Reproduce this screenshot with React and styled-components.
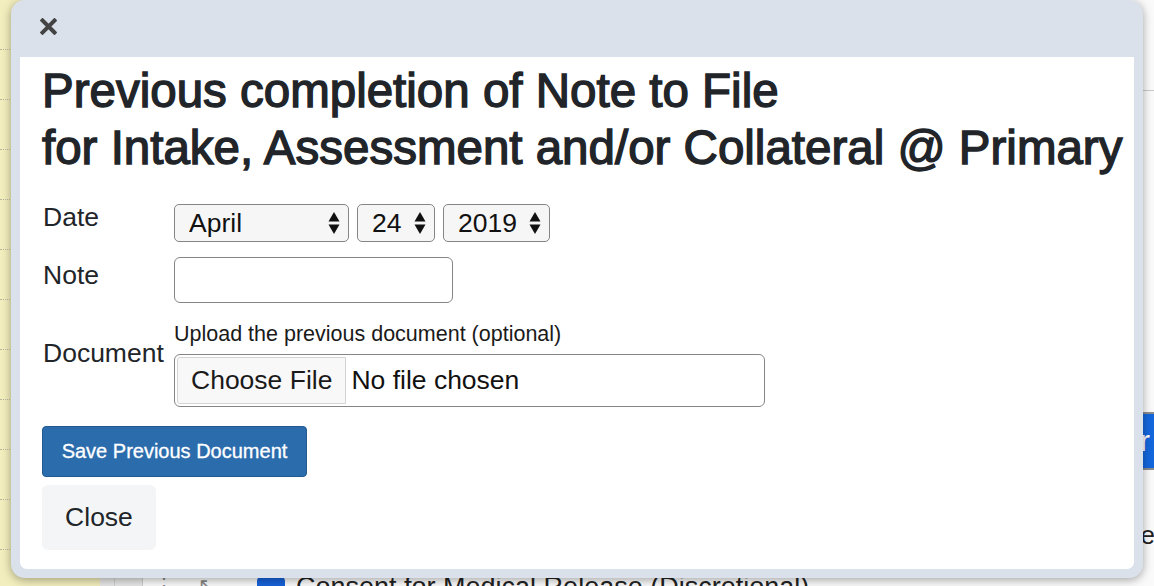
import styled, { createGlobalStyle } from 'styled-components'

const GlobalStyle = createGlobalStyle`
  * { box-sizing: border-box; }
  html, body {
    margin: 0;
    height: 100%;
    overflow: hidden;
    font-family: "Liberation Sans", Arial, sans-serif;
    color: #212529;
    background: #ffffff;
  }
`

const months = ['January', 'February', 'March', 'April', 'May', 'June', 'July', 'August', 'September', 'October', 'November', 'December']
const days = Array.from({ length: 31 }, (_, i) => i + 1)
const years = [2017, 2018, 2019, 2020, 2021]

function UpDown() {
  return (
    <svg width='12' height='24' viewBox='0 0 12 24'>
      <path d='M6 1 L11.5 10.5 H0.5 Z' fill='#111' />
      <path d='M6 23 L11.5 13.5 H0.5 Z' fill='#111' />
    </svg>
  )
}

function DateSelect({ width, value, options }) {
  return (
    <SelectWrap $width={width}>
      <Select defaultValue={value}>
        {options.map(o => <option key={o} value={o}>{o}</option>)}
      </Select>
      <Arrow><UpDown /></Arrow>
    </SelectWrap>
  )
}

function App() {
  return (
    <>
      <GlobalStyle />
      <Page>
        <Sidebar>
          {Array.from({ length: 12 }, (_, i) => <SideRow key={i} />)}
        </Sidebar>
        <Main>
          <TopBar />
          <Section />
          <ActionRow>
            <BlueButton>Order</BlueButton>
          </ActionRow>
          <PreviewRow>Review</PreviewRow>
          <ChecklistRow>
            <Cell $width={15} />
            <Cell $width={28} />
            <Handle>⋮</Handle>
            <Handle>↖</Handle>
            <CheckBox />
            <CheckText>Consent for Medical Release (Discretional)</CheckText>
          </ChecklistRow>
        </Main>
      </Page>

      <Modal>
        <ModalHeader>
          <CloseX aria-label='close'>
            <svg width='17' height='17' viewBox='0 0 17 17'>
              <path d='M2.5 2.5 L14.5 14.5 M14.5 2.5 L2.5 14.5' stroke='#444' strokeWidth='4' strokeLinecap='square' />
            </svg>
          </CloseX>
        </ModalHeader>
        <ModalBody>
          <Title>
            Previous completion of Note to File
            <br />
            for Intake, Assessment and/or Collateral @ Primary
          </Title>
          <Form>
            <Row>
              <Label>Date</Label>
              <Fields>
                <DateSelect width={175} value='April' options={months} />
                <DateSelect width={78} value={24} options={days} />
                <DateSelect width={107} value={2019} options={years} />
              </Fields>
            </Row>
            <Row $gap={15}>
              <Label $offset={5}>Note</Label>
              <TextInput type='text' />
            </Row>
            <Row $gap={18}>
              <Label $offset={19}>Document</Label>
              <Stack>
                <Caption>Upload the previous document (optional)</Caption>
                <FileBox>
                  <HiddenFile type='file' />
                  <FileButton>Choose File</FileButton>
                  <FileName>No file chosen</FileName>
                </FileBox>
              </Stack>
            </Row>
            <SaveButton>Save Previous Document</SaveButton>
            <CloseButton>Close</CloseButton>
          </Form>
        </ModalBody>
      </Modal>
    </>
  )
}

export default App

const Page = styled.div`
  display: flex;
  width: 1154px;
  height: 586px;
  overflow: hidden;
`

const Sidebar = styled.aside`
  width: 100px;
  flex-shrink: 0;
  background: #f2eebd;
  display: flex;
  flex-direction: column;
`

const SideRow = styled.div`
  height: 50px;
  flex-shrink: 0;
  border-bottom: 1px dotted #b9b6a0;
`

const Main = styled.main`
  flex: 1;
  display: flex;
  flex-direction: column;
  background: #fafafa;
`

const TopBar = styled.div`
  height: 91px;
  flex-shrink: 0;
  border-bottom: 1px solid #c9c9c9;
`

const Section = styled.div`
  height: 321px;
  flex-shrink: 0;
`

const ActionRow = styled.div`
  display: flex;
  justify-content: flex-end;
  margin-right: -40px;
  height: 58px;
  flex-shrink: 0;
`

const BlueButton = styled.button`
  height: 58px;
  padding: 0 44px 0 20px;
  background: #1466dc;
  color: #fff;
  border: none;
  border-top: 2px solid #8c8c8c;
  border-bottom: 2px solid #8c8c8c;
  font: 30px "Liberation Sans", Arial, sans-serif;
`

const PreviewRow = styled.div`
  height: 100px;
  flex-shrink: 0;
  display: flex;
  justify-content: flex-end;
  align-items: center;
  padding-top: 30px;
  margin-right: -53px;
  font-size: 26px;
  color: #222;
`

const ChecklistRow = styled.div`
  display: flex;
  align-items: flex-start;
  height: 40px;
  flex-shrink: 0;
  margin-top: 1px;
`

const Cell = styled.div`
  width: ${p => p.$width}px;
  height: 40px;
  background: #e7e7e7;
  border-right: 1px solid #cfcfcf;
`

const Handle = styled.span`
  width: 42px;
  text-align: center;
  font-size: 20px;
  color: #888;
  padding-top: 2px;
`

const CheckBox = styled.span`
  width: 28px;
  height: 28px;
  margin: 5px 11px 0 30px;
  background: #1762d9;
  border-radius: 5px;
`

const CheckText = styled.span`
  font-size: 27px;
  line-height: 28px;
  padding-top: 2px;
  color: #222;
  white-space: nowrap;
`

const Modal = styled.div`
  position: fixed;
  left: 11px;
  top: 0;
  width: 1132px;
  height: 578px;
  display: flex;
  flex-direction: column;
  padding: 0 9px 9px;
  background: #dae1ea;
  border-radius: 14px;
  box-shadow: 0 2px 10px rgba(0, 0, 0, 0.35);
`

const ModalHeader = styled.div`
  height: 57px;
  flex-shrink: 0;
  display: flex;
  align-items: flex-start;
  padding: 18px 0 0 20px;
`

const CloseX = styled.button`
  display: flex;
  padding: 0;
  border: none;
  background: transparent;
`

const ModalBody = styled.div`
  flex: 1;
  background: #ffffff;
  border-radius: 0 0 7px 7px;
  padding: 5px 22px;
`

const Title = styled.h2`
  margin: 0;
  font-size: 47.5px;
  line-height: 57px;
  font-weight: 400;
  -webkit-text-stroke: 1.4px #212529;
  color: #212529;
  white-space: nowrap;
`

const Form = styled.form`
  display: flex;
  flex-direction: column;
  align-items: flex-start;
  margin-top: 28px;
`

const Row = styled.div`
  display: flex;
  align-items: flex-start;
  margin-top: ${p => p.$gap || 0}px;
`

const Label = styled.label`
  width: 131px;
  flex-shrink: 0;
  font-size: 26.5px;
  line-height: 1;
  padding-top: ${p => p.$offset || 0}px;
  margin-left: 1px;
`

const Fields = styled.div`
  display: flex;
  gap: 8px;
`

const SelectWrap = styled.div`
  position: relative;
  width: ${p => p.$width}px;
  height: 38px;
`

const Select = styled.select`
  appearance: none;
  width: 100%;
  height: 100%;
  padding: 0 0 0 14px;
  background: #f6f6f6;
  border: 1.5px solid #858585;
  border-radius: 5px;
  font: 26.5px "Liberation Sans", Arial, sans-serif;
  color: #111;
`

const Arrow = styled.span`
  position: absolute;
  right: 9px;
  top: 7px;
  display: flex;
  pointer-events: none;
`

const TextInput = styled.input`
  width: 279px;
  height: 46px;
  border: 1.5px solid #858585;
  border-radius: 6px;
  font: 26.5px "Liberation Sans", Arial, sans-serif;
  padding: 0 10px;
`

const Stack = styled.div`
  display: flex;
  flex-direction: column;
  gap: 7px;
`

const Caption = styled.span`
  font-size: 21.5px;
  line-height: 26px;
  color: #1a1a1a;
`

const FileBox = styled.label`
  display: flex;
  align-items: stretch;
  width: 591px;
  height: 53px;
  padding: 2px;
  border: 1.5px solid #858585;
  border-radius: 6px;
  background: #fff;
`

const HiddenFile = styled.input`
  display: none;
`

const FileButton = styled.span`
  display: flex;
  align-items: center;
  padding: 0 13px;
  background: #f8f8f8;
  border: 1px solid #d4d4d4;
  border-radius: 3px 0 0 3px;
  font-size: 26.5px;
  color: #1a1a1a;
`

const FileName = styled.span`
  display: flex;
  align-items: center;
  padding-left: 5px;
  font-size: 26.5px;
  color: #111;
`

const SaveButton = styled.button`
  margin-top: 19px;
  width: 265px;
  height: 51px;
  background: #2b6cad;
  border: 1px solid #23598f;
  border-radius: 4px;
  color: #fff;
  font: 20px "Liberation Sans", Arial, sans-serif;
  -webkit-text-stroke: 0.3px #fff;
`

const CloseButton = styled.button`
  margin-top: 8px;
  width: 114px;
  height: 65px;
  background: #f4f5f7;
  border: none;
  border-radius: 6px;
  color: #212529;
  font: 26.5px "Liberation Sans", Arial, sans-serif;
`
